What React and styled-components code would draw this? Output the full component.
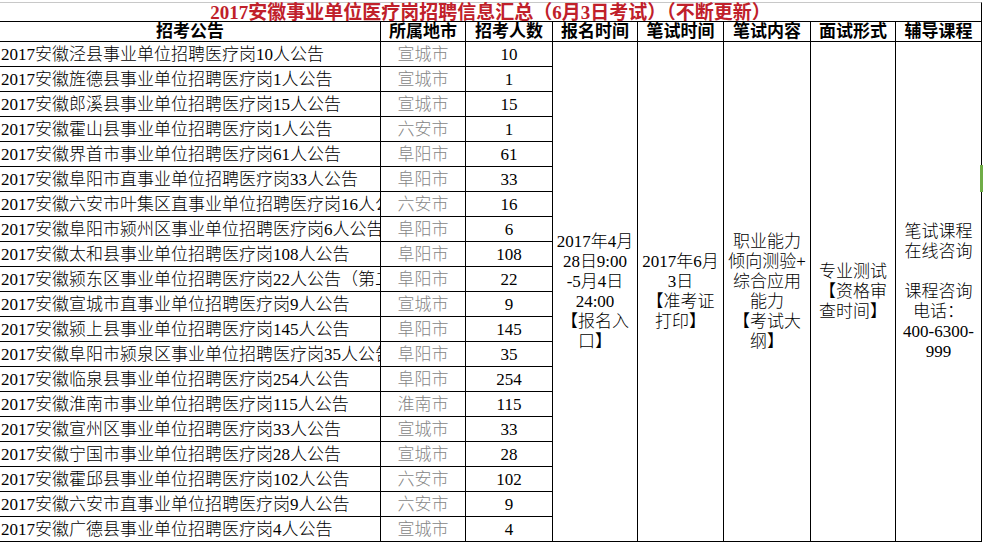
import React from "react";
import styled, { createGlobalStyle } from "styled-components";

const Global = createGlobalStyle`
  html, body { margin: 0; padding: 0; background: #fff; }
  body { overflow: hidden; }
  * { box-sizing: border-box; }
`;

const FONT = `"Liberation Serif", "Noto Sans CJK SC", serif`;

const Page = styled.div`
  position: relative;
  width: 983px;
  height: 542px;
  padding-top: 2px;
  font-family: ${FONT};
  color: #000;
`;

const Sheet = styled.div`
  display: grid;
  grid-template-columns: 381px 85px 87px 85px 86px 87px 85px 86px;
  grid-template-rows: 20px 20px repeat(20, 25px);
  width: 982px;
`;

const Title = styled.div`
  grid-column: 1 / -1;
  border-top: 1px solid #c8c8c8;
  border-bottom: 1px solid #000;
  border-right: 1px solid #000;
  display: flex;
  align-items: center;
  justify-content: center;
  padding-top: 1px;
  color: #c0202a;
  font-size: 19px;
  font-weight: 700;
  white-space: nowrap;
  line-height: 1;
`;

const Cell = styled.div`
  border-right: 1px solid #000;
  border-bottom: 1px solid #000;
  display: flex;
  align-items: center;
  overflow: hidden;
  white-space: nowrap;
  font-size: 17px;
  font-weight: 300;
  line-height: 1;
`;

const HeadCell = styled(Cell)`
  justify-content: center;
  font-weight: 700;
`;

const NameCell = styled(Cell)`
  grid-column: 1;
  padding-left: 1px;
  justify-content: flex-start;
`;

const CityCell = styled(Cell)`
  grid-column: 2;
  justify-content: center;
  color: #858585;
`;

const CountCell = styled(Cell)`
  grid-column: 3;
  justify-content: center;
`;

const MergedCell = styled(Cell)`
  grid-column: ${(p) => p.$col};
  grid-row: 3 / span 20;
  justify-content: center;
  text-align: center;
  white-space: normal;
  line-height: 20px;
`;

const ScrollMark = styled.div`
  position: absolute;
  left: 980px;
  top: 165px;
  width: 3px;
  height: 27px;
  background: #70ad47;
`;

const headers = [
  "招考公告",
  "所属地市",
  "招考人数",
  "报名时间",
  "笔试时间",
  "笔试内容",
  "面试形式",
  "辅导课程",
];

const rows = [
  ["2017安徽泾县事业单位招聘医疗岗10人公告", "宣城市", "10"],
  ["2017安徽旌德县事业单位招聘医疗岗1人公告", "宣城市", "1"],
  ["2017安徽郎溪县事业单位招聘医疗岗15人公告", "宣城市", "15"],
  ["2017安徽霍山县事业单位招聘医疗岗1人公告", "六安市", "1"],
  ["2017安徽界首市事业单位招聘医疗岗61人公告", "阜阳市", "61"],
  ["2017安徽阜阳市直事业单位招聘医疗岗33人公告", "阜阳市", "33"],
  ["2017安徽六安市叶集区直事业单位招聘医疗岗16人公告", "六安市", "16"],
  ["2017安徽阜阳市颍州区事业单位招聘医疗岗6人公告", "阜阳市", "6"],
  ["2017安徽太和县事业单位招聘医疗岗108人公告", "阜阳市", "108"],
  ["2017安徽颍东区事业单位招聘医疗岗22人公告（第二批）", "阜阳市", "22"],
  ["2017安徽宣城市直事业单位招聘医疗岗9人公告", "宣城市", "9"],
  ["2017安徽颍上县事业单位招聘医疗岗145人公告", "阜阳市", "145"],
  ["2017安徽阜阳市颍泉区事业单位招聘医疗岗35人公告", "阜阳市", "35"],
  ["2017安徽临泉县事业单位招聘医疗岗254人公告", "阜阳市", "254"],
  ["2017安徽淮南市事业单位招聘医疗岗115人公告", "淮南市", "115"],
  ["2017安徽宣州区事业单位招聘医疗岗33人公告", "宣城市", "33"],
  ["2017安徽宁国市事业单位招聘医疗岗28人公告", "宣城市", "28"],
  ["2017安徽霍邱县事业单位招聘医疗岗102人公告", "六安市", "102"],
  ["2017安徽六安市直事业单位招聘医疗岗9人公告", "六安市", "9"],
  ["2017安徽广德县事业单位招聘医疗岗4人公告", "宣城市", "4"],
];

const merged = [
  ["2017年4月", "28日9:00", "-5月4日", "24:00", "【报名入", "口】"],
  ["2017年6月", "3日", "【准考证", "打印】"],
  ["职业能力", "倾向测验+", "综合应用", "能力", "【考试大", "纲】"],
  ["专业测试", "【资格审", "查时间】"],
  ["笔试课程", "在线咨询", "\u00a0", "课程咨询", "电话：", "400-6300-", "999"],
];

const Lines = ({ lines }) => (
  <div>
    {lines.map((l, i) => (
      <div key={i}>{l}</div>
    ))}
  </div>
);

export default function App() {
  return (
    <Page>
      <Global />
      <Sheet>
        <Title>2017安徽事业单位医疗岗招聘信息汇总（6月3日考试）（不断更新）</Title>
        {headers.map((h) => (
          <HeadCell key={h}>{h}</HeadCell>
        ))}
        {merged.map((lines, i) => (
          <MergedCell key={"m" + i} $col={i + 4}>
            <Lines lines={lines} />
          </MergedCell>
        ))}
        {rows.map(([name, city, count], i) => (
          <React.Fragment key={i}>
            <NameCell>{name}</NameCell>
            <CityCell>{city}</CityCell>
            <CountCell>{count}</CountCell>
          </React.Fragment>
        ))}
      </Sheet>
      <ScrollMark />
    </Page>
  );
}
